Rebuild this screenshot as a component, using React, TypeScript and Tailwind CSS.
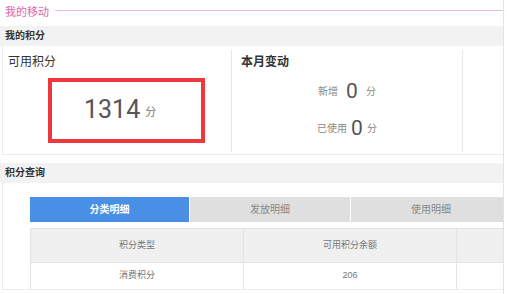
import React from 'react';

const font = { fontFamily: '"Liberation Sans", "Noto Sans CJK SC", sans-serif' };
const num = { fontFamily: 'Roboto, "Liberation Sans", sans-serif' };

const SectionBar: React.FC<{ title: string }> = ({ title }) => (
  <div className="h-[20px] bg-[#f2f2f2] flex items-center pl-[5px]">
    <span className="text-[10px] font-bold text-[#333] leading-none">{title}</span>
  </div>
);

export default function App() {
  return (
    <div className="w-[507px] h-[294px] bg-white overflow-hidden" style={font}>
      <div className="w-[504px] h-full border-r border-[#e3e3e3] overflow-hidden">
        {/* page title */}
        <div className="h-[26px] flex items-start">
          <span className="text-[11px] leading-[24px] text-[#e4649f] pl-[5px] pr-[6px] whitespace-nowrap">我的移动</span>
          <div className="flex-1 h-px bg-[#f2b6cf] mt-[10px]" />
        </div>

        <SectionBar title="我的积分" />

        {/* points panel */}
        <div className="ml-[2px] border-l border-b border-[#ececec] h-[109px] flex pt-[4px] overflow-hidden">
          <div className="w-[229px] shrink-0 h-[102px] border-r border-[#e6e6e6]">
            <div className="text-[12px] leading-[16px] text-[#333] pl-[5px] mt-[4px]">可用积分</div>
            <div className="ml-[45px] mt-[8px] w-[157px] h-[65px] border-[4px] border-[#ee383c] flex items-center pl-[32px] pb-[3px]">
              <span className="text-[25px] leading-none text-[#555]" style={num}>1314</span>
              <span className="text-[11px] text-[#777] ml-[5px] mt-[6px]">分</span>
            </div>
          </div>
          <div className="w-[231px] shrink-0 h-[102px] border-r border-[#e6e6e6]">
            <div className="text-[12px] leading-[16px] font-bold text-[#333] pl-[9px] mt-[4px]">本月变动</div>
            <div className="mt-[7px] h-[28px] flex items-center justify-center text-[#888]">
              <span className="text-[10px]">新增</span>
              <span className="text-[21px] leading-none text-[#555] mx-[8px]" style={num}>0</span>
              <span className="text-[10px]">分</span>
            </div>
            <div className="mt-[9px] h-[28px] flex items-center justify-center text-[#888]">
              <span className="text-[10px]">已使用</span>
              <span className="text-[21px] leading-none text-[#555] mx-[4px]" style={num}>0</span>
              <span className="text-[10px]">分</span>
            </div>
          </div>
          <div className="w-[230px] shrink-0" />
        </div>

        <div className="h-[8px]" />
        <SectionBar title="积分查询" />

        {/* query panel */}
        <div className="ml-[2px] border-l border-b border-[#ececec] h-[107px] overflow-hidden pt-[14px] pl-[27px]">
          <div className="flex w-[481px] h-[25px] gap-px bg-white">
            <div className="w-[159px] shrink-0 bg-[#4a8fe6] flex items-center justify-center text-[10px] text-white font-bold">分类明细</div>
            <div className="w-[160px] shrink-0 bg-[#dfdfdf] flex items-center justify-center text-[10px] text-[#888]">发放明细</div>
            <div className="w-[160px] shrink-0 bg-[#dfdfdf] flex items-center justify-center text-[10px] text-[#888]">使用明细</div>
          </div>
          <table className="mt-[6px] border-collapse text-[9px] text-[#777] table-fixed w-[639px]">
            <tbody>
              <tr className="bg-[#f0f0f0] h-[34px]">
                <td className="w-[213px] border border-[#e3e3e3] text-center">积分类型</td>
                <td className="w-[213px] border border-[#e3e3e3] text-center">可用积分余额</td>
                <td className="w-[213px] border border-[#e3e3e3] text-center"></td>
              </tr>
              <tr className="h-[27px]">
                <td className="border border-[#e3e3e3] text-center">消费积分</td>
                <td className="border border-[#e3e3e3] text-center">206</td>
                <td className="border border-[#e3e3e3] text-center"></td>
              </tr>
            </tbody>
          </table>
        </div>
      </div>
    </div>
  );
}
